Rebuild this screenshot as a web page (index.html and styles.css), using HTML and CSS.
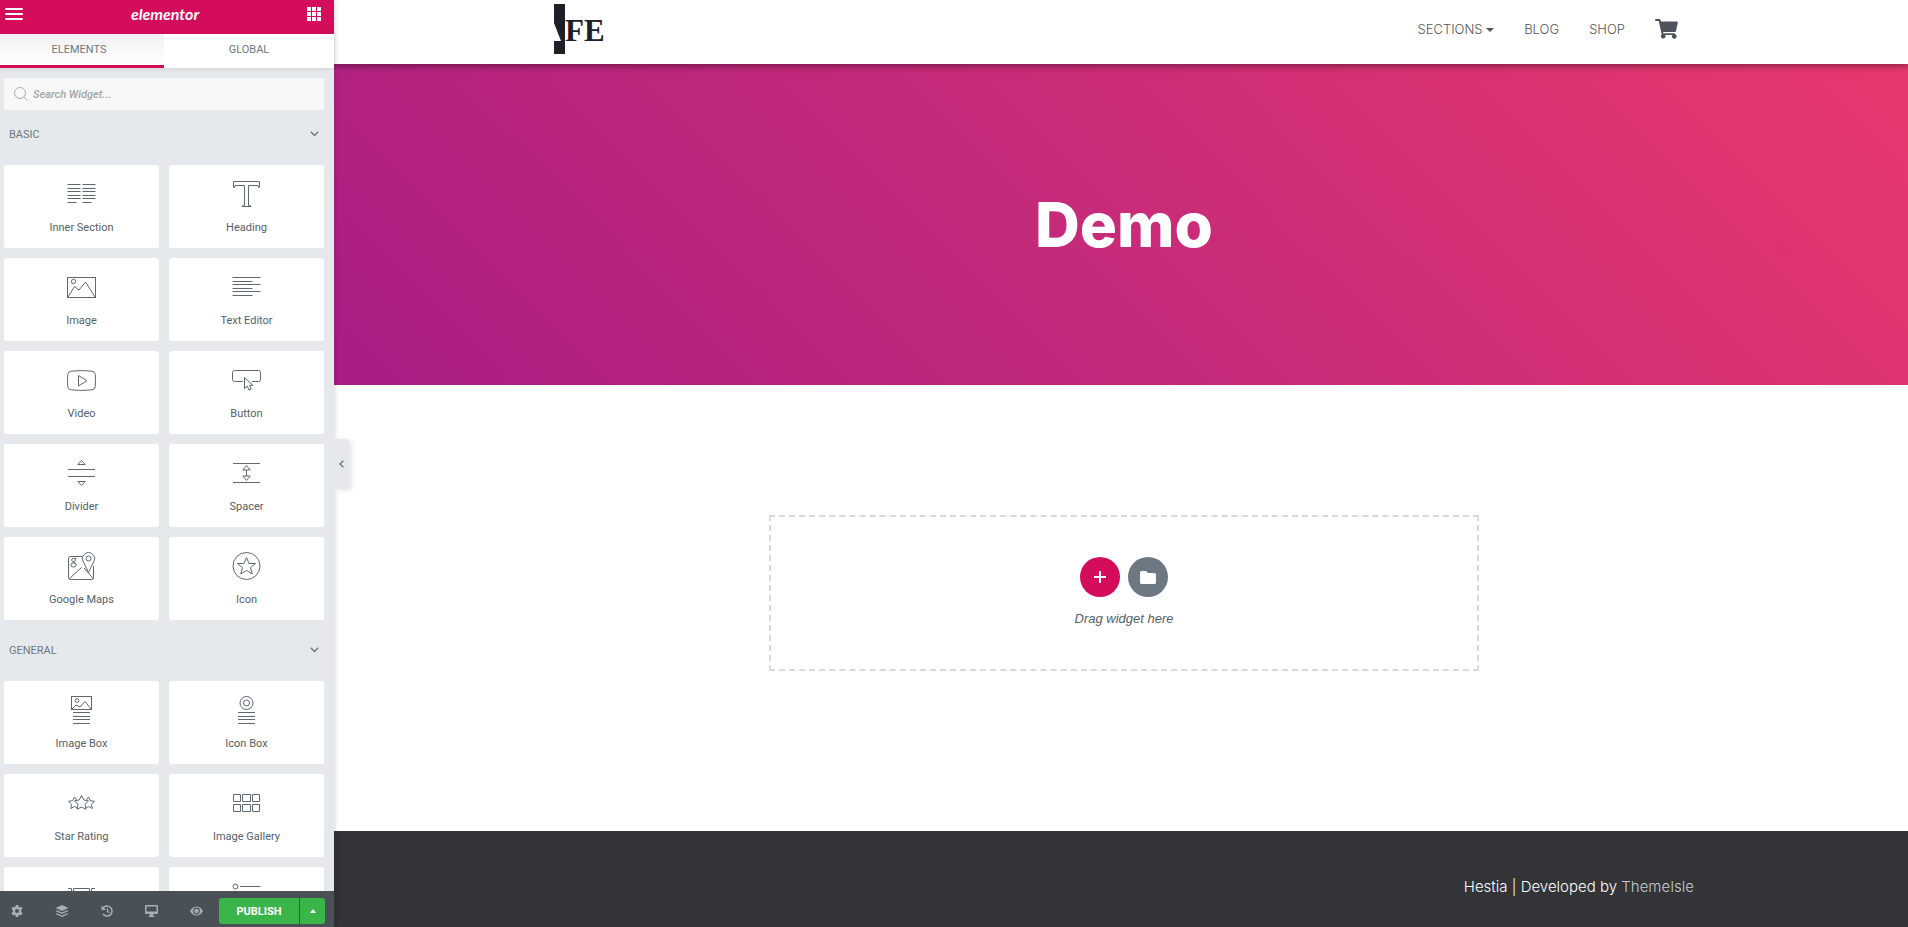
FILE: index.html
```
<!DOCTYPE html>
<html lang="en">
<head>
  <meta charset="UTF-8" />
  <meta name="viewport" content="width=device-width, initial-scale=1.0"/>
  <title>Elementor | Demo</title>
  <link rel="stylesheet" href="styles.css">
</head>
<body>
  <!-- editor panel -->
  <aside class="panel">
    <header class="panel-header">
      <button class="header-btn" aria-label="Menu">
        <svg width="18" height="12" viewBox="0 0 18 12" fill="#fff"><rect width="18" height="2" rx="1"/><rect y="5" width="18" height="2" rx="1"/><rect y="10" width="18" height="2" rx="1"/></svg>
      </button>
      <div class="panel-logo">elementor</div>
      <button class="header-btn" aria-label="Widgets">
        <svg width="14" height="14" viewBox="0 0 14 14" fill="#fff"><path d="M0 0h4v4H0zM5 0h4v4H5zM10 0h4v4h-4zM0 5h4v4H0zM5 5h4v4H5zM10 5h4v4h-4zM0 10h4v4H0zM5 10h4v4H5zM10 10h4v4h-4z"/></svg>
      </button>
    </header>

    <nav class="tabs">
      <button class="tab active">Elements</button>
      <button class="tab">Global</button>
    </nav>

    <div class="panel-content">
      <label class="search">
        <svg width="14" height="14" viewBox="0 0 14 14" fill="none" stroke="#a4afb7"><circle cx="6" cy="6" r="5.5"/><path d="M10 10l3.5 3.5"/></svg>
        <input type="text" placeholder="Search Widget..." aria-label="Search Widget" />
      </label>

      <section class="category">
        <button class="category-title">Basic
          <svg width="9" height="6" viewBox="0 0 9 6"><path d="M.8 .8l3.7 3.7L8.2 .8"/></svg>
        </button>
        <div class="widgets">
          <button class="widget">
            <svg class="icon" viewBox="0 0 29 28"><path d="M.5 4.5h13M.5 8.5h13M.5 11.5h13M.5 15.5h13M.5 18.5h13M.5 22.5h9M15.500 4.500h13M15.500 8.500h13M15.500 11.500h13M15.500 15.500h13M15.500 18.500h13M15.500 22.500h9"/></svg>
            Inner Section
          </button>
          <button class="widget">
            <svg class="icon" viewBox="0 0 29 28"><path d="M1.500 7.500v-6h26v6h-1l-.5-2h-9.500v20l2.500 .5v.5h-9v-.5l2.500-.5v-20h-9.500l-.5 2z"/></svg>
            Heading
          </button>
          <button class="widget">
            <svg class="icon" viewBox="0 0 29 28"><rect x=".5" y="4.500" width="28" height="20"/><circle cx="6.500" cy="8.500" r="2.200"/><path d="M1 24l6.500-10.500 4.500 3.500 6.500-8L28 24"/></svg>
            Image
          </button>
          <button class="widget">
            <svg class="icon" viewBox="0 0 29 28"><path d="M.5 4.500h28M.5 8.500h20M.5 11.500h28M.5 15.500h20M.5 18.500h28M.5 22.500h20"/></svg>
            Text Editor
          </button>
          <button class="widget">
            <svg class="icon" viewBox="0 0 29 28"><path d="M4 5.200q10.500-1.400 21 0q3 .3 3.300 3.300q.4 6 0 12q-.3 3-3.300 3.300q-10.500 1.400-21 0q-3-.3-3.300-3.300q-.4-6 0-12q.3-3 3.300-3.300zM11.500 9.500v10.500l8.500-5.300z"/></svg>
            Video
          </button>
          <button class="widget">
            <svg class="icon" viewBox="0 0 29 28"><path d="M10.500 15.500H2.500q-2 0-2-2v-7q0-2 2-2h24q2 0 2 2v7q0 2-2 2H20M12.500 11.500v11l2.800-2.400 1.700 4 2.200-1-1.700-3.800h3.500z"/></svg>
            Button
          </button>
          <button class="widget">
            <svg class="icon" viewBox="0 0 29 28"><path d="M1 10.500h27M1 17.500h27M14.500 1.500l3.700 4h-7.400zM14.500 26.500l3.700-4h-7.400z"/></svg>
            Divider
          </button>
          <button class="widget">
            <svg class="icon" viewBox="0 0 29 28"><path d="M1 4.500h27M1 23.500h27M14.500 6.500l3.700 4.500h-7.400zM14.500 21.500l3.700-4.500h-7.400zM14.500 11v6"/></svg>
            Spacer
          </button>
          <button class="widget">
            <svg class="icon" viewBox="0 0 29 28"><path d="M15 4.500H3.500q-2 0-2 2v19q0 2 2 2h21q2 0 2-2V14M2 27L14.500 15.500M17 16l9.500 11"/><path d="M21.500 20.500l-5-10.500a6 6 0 1 1 10 0z"/><circle cx="21.500" cy="6.500" r="2.500"/><circle cx="6.500" cy="8" r="1.800"/><ellipse cx="6.500" cy="13" rx="2.700" ry="2"/><path d="M8 6.500h1.500M6 10l2 1"/></svg>
            Google Maps
          </button>
          <button class="widget">
            <svg class="icon" viewBox="0 0 29 28"><circle cx="14.500" cy="14" r="13.500"/><path d="M14.500 5.500l2.500 6h6.500l-5 4.200 1.800 6.300-5.800-3.600L8.700 22l1.800-6.300-5-4.200H12z"/></svg>
            Icon
          </button>
        </div>
      </section>

      <section class="category">
        <button class="category-title">General
          <svg width="9" height="6" viewBox="0 0 9 6"><path d="M.8 .8l3.700 3.700L8.200 .8"/></svg>
        </button>
        <div class="widgets">
          <button class="widget">
            <svg class="icon" viewBox="0 0 29 28"><rect x="4.500" y=".5" width="20" height="13"/><circle cx="10" cy="4.500" r="1.900"/><path d="M5 13l4-4 4 2 5-5.500 6 7.500M6 16.500h17M6 20.500h17M6 23.500h17M6 27.500h17"/></svg>
            Image Box
          </button>
          <button class="widget">
            <svg class="icon" viewBox="0 0 29 28"><circle cx="14.500" cy="7" r="6.500"/><circle cx="14.500" cy="7" r="3"/><path d="M6 16.500h17M6 20.500h17M6 23.500h17M6 27.500h17"/></svg>
            Icon Box
          </button>
          <button class="widget">
            <svg class="icon" viewBox="0 0 29 28"><path d="M14.500 6.500l2.300 4.500 4.700 .8-3.400 3.500 .8 5-4.400-2.300-4.400 2.300 .8-5-3.400-3.500 4.700-.8z"/><path d="M9.500 10.800L7.500 8l-1.800 3.700-4.200 .6 3 3-.7 4.200 3.700-2 2.300 1.200M19.500 10.800l2-2.800 1.800 3.700 4.200 .6-3 3 .7 4.200-3.700-2-2.300 1.200"/></svg>
            Star Rating
          </button>
          <button class="widget">
            <svg class="icon" viewBox="0 0 29 28"><path d="M1.500 5.500h7v7h-7zM10.500 5.500h8v7h-8zM20.500 5.500h7v7h-7zM1.500 15.500h7v7h-7zM10.500 15.500h8v7h-8zM20.500 15.500h7v7h-7z"/></svg>
            Image Gallery
          </button>
          <button class="widget" aria-label="Image Carousel">
            <svg class="icon" viewBox="0 0 29 28"><path d="M1 6.500h3.500v15H1M28 6.500h-3.500v15H28M6.500 6.500h16v15h-16z"/></svg>
          </button>
          <button class="widget" aria-label="Icon List">
            <svg class="icon" viewBox="0 0 29 28"><circle cx="3.500" cy="4.500" r="2.500"/><circle cx="3.500" cy="14" r="2.500"/><circle cx="3.500" cy="23.500" r="2.500"/><path d="M8 4.500h20.500M8 14.500h20.500M8 23.500h20.500"/></svg>
          </button>
        </div>
      </section>
    </div>

    <footer class="panel-footer">
      <div class="tools">
        <button class="tool" aria-label="Settings">
          <svg width="12" height="12" viewBox="0 0 12 12"><path fill-rule="evenodd" d="M4.800 0h2.400l.4 1.700 1 .6 1.700-.6 1.200 2.100L10.200 5v2l1.300 1.200-1.200 2.100-1.700-.6-1 .6-.4 1.700H4.800l-.4-1.700-1-.6-1.700 .6L.5 8.200 1.800 7V5L.5 3.800l1.200-2.100 1.700 .6 1-.6zM6 4a2 2 0 1 0 0 4a2 2 0 0 0 0-4z"/></svg>
        </button>
        <button class="tool" aria-label="Navigator">
          <svg width="14" height="12" viewBox="0 0 14 12"><path d="M7 0l6.500 3L7 6 .5 3zM2 5.200l5 2.300 5-2.300 1.500 .8L7 9 .5 6zM2 8.200l5 2.300 5-2.300 1.500 .8L7 12 .5 9z"/></svg>
        </button>
        <button class="tool" aria-label="History">
          <svg width="12" height="12" viewBox="0 0 12 12"><path d="M2.200 2.800A5 5 0 1 1 2 9" fill="none" stroke="#a4afb7" stroke-width="1.600"/><path d="M.5 .5v4.500H5z"/><path d="M6.500 3.200v3.300l2 1.300" fill="none" stroke="#a4afb7" stroke-width="1.300"/></svg>
        </button>
        <button class="tool" aria-label="Responsive mode">
          <svg width="13" height="12" viewBox="0 0 13 12"><path fill-rule="evenodd" d="M1 0h11q1 0 1 1v7q0 1-1 1H8l.5 2H9.500v1h-6v-1h1L5 9H1Q0 9 0 8V1q0-1 1-1zM1.500 1.500v5h10v-5z"/></svg>
        </button>
        <button class="tool" aria-label="Preview changes">
          <svg width="13" height="10" viewBox="0 0 13 10"><path fill-rule="evenodd" d="M6.500 .5Q10.500 .5 13 5 10.500 9.500 6.500 9.500T0 5Q2.500 .5 6.500 .5zM6.500 1.600a3.400 3.400 0 1 0 0 6.800a3.400 3.400 0 0 0 0-6.800z"/><circle cx="6.500" cy="5" r="2.300"/></svg>
        </button>
      </div>
      <button class="publish">Publish</button>
      <button class="publish-more" aria-label="Save options">
        <svg width="6" height="4" viewBox="0 0 6 4" fill="#fff"><path d="M3 0l3 4H0z"/></svg>
      </button>
    </footer>

    <button class="panel-toggle" aria-label="Hide panel">
      <svg width="5" height="8" viewBox="0 0 5 8"><path d="M4.300 .8L1 4l3.300 3.200"/></svg>
    </button>
  </aside>

  <!-- page preview -->
  <div class="preview">
    <header class="site-header">
      <div class="container">
        <a href="#" class="site-logo" aria-label="JFE">
          <svg width="52" height="50" viewBox="0 0 52 50" fill="#1f2027"><path d="M0 0h11v50H0V37h7L0 19z"/><text x="11" y="37">FE</text></svg>
        </a>
        <nav class="site-nav">
          <a href="#">Sections <span class="caret"></span></a>
          <a href="#">Blog</a>
          <a href="#">Shop</a>
          <a href="#" class="cart" aria-label="Cart">
            <svg width="23" height="20" viewBox="0 0 23 20" fill="#4d545c"><path d="M1 0h3.500q.8 0 1 .8L5.900 2.500H22q1.100 0 .8 1.200L21 12q-.2 .9-1.100 .9H8.100l.3 1.400h10.900q1 0 .8 1a2.300 2.300 0 1 1-2.700 .7H10.200A2.300 2.300 0 1 1 6.700 15.500L3.700 2H1Q0 2 0 1t1-1z"/></svg>
          </a>
        </nav>
      </div>
    </header>

    <div class="hero">
      <h1>Demo</h1>
    </div>

    <main>
      <div class="drop-area">
        <div class="drop-buttons">
          <button class="round-btn add" aria-label="Add new section">
            <svg width="12" height="12" viewBox="0 0 12 12" fill="#fff"><path d="M5 0h2v5h5v2H7v5H5V7H0V5h5z"/></svg>
          </button>
          <button class="round-btn" aria-label="Add template">
            <svg width="16" height="13" viewBox="0 0 16 13" fill="#fff"><path d="M1.500 0H6l2 2h6.500Q16 2 16 3.500v8q0 1.500-1.500 1.500h-13Q0 13 0 11.500v-10Q0 0 1.500 0z"/></svg>
          </button>
        </div>
        <p>Drag widget here</p>
      </div>
    </main>

    <footer class="site-footer">
      <div class="container">
        <p>Hestia | Developed by <a href="#">ThemeIsle</a></p>
      </div>
    </footer>
  </div>
</body>
</html>
```

FILE: styles.css
```
* {
  margin: 0;
  padding: 0;
  box-sizing: border-box;
}

body {
  display: flex;
  height: 100vh;
  overflow: hidden;
  background: #fff;
  font-family: Roboto, sans-serif;
}

button {
  border: none;
  background: none;
  font-family: inherit;
  cursor: pointer;
}

a {
  color: inherit;
  text-decoration: none;
}

svg {
  display: block;
}

/* panel */
.panel {
  position: relative;
  z-index: 10;
  width: 334px;
  flex-shrink: 0;
  display: flex;
  flex-direction: column;
  background: #e6e9ec;
  color: #556068;
  box-shadow: 0 0 6px rgba(0,0,0,0.2);
}

.panel-header {
  height: 34px;
  flex-shrink: 0;
  display: flex;
  justify-content: space-between;
  padding: 0 13px 6px 5px;
  align-items: center;
  background: #d30c5c;
}

.panel-logo {
  color: #fff;
  font-family: Lato, sans-serif;
  font-size: 16px;
  line-height: 20px;
  font-weight: bold;
  font-style: italic;
}

.tabs {
  height: 34px;
  flex-shrink: 0;
  display: grid;
  grid-template-columns: 164px 1fr;
  background: #fff;
  box-shadow: 0 1px 4px rgba(0,0,0,0.1);
}

.tab {
  border-bottom: 3px solid transparent;
  color: #6d7882;
  font-size: 11px;
  text-transform: uppercase;
}

.tab.active {
  padding-right: 6px;
  border-color: #d30c5c;
  background: linear-gradient(#f1f1f1, #fff);
}

.panel-content {
  flex: 1;
  min-height: 0;
  overflow: hidden;
  padding: 10px 10px 0 4px;
}

.search {
  display: flex;
  align-items: center;
  height: 32px;
  margin-bottom: 7px;
  padding-left: 10px;
  gap: 5px;
  border-radius: 3px;
  background: #f8f8f8;
}

.search input {
  flex: 1;
  border: none;
  outline: none;
  background: none;
  font-family: inherit;
  font-size: 11px;
  font-weight: 500;
  font-style: italic;
}

.search input::placeholder {
  color: #a0a5aa;
}

.category {
  margin-bottom: 13px;
}

.category-title {
  display: flex;
  align-items: center;
  justify-content: space-between;
  width: 100%;
  height: 34px;
  margin-bottom: 14px;
  padding: 0 5px;
  color: #6d7882;
  font-size: 11px;
  text-transform: uppercase;
}

.category-title svg,
.panel-toggle svg {
  fill: none;
  stroke: #6d7882;
  stroke-width: 1.5px;
}

.widgets {
  display: grid;
  grid-template-columns: 1fr 1fr;
  gap: 10px;
}

.widget {
  display: flex;
  flex-direction: column;
  align-items: center;
  gap: 13px;
  height: 83px;
  padding-top: 15px;
  border-radius: 3px;
  background: #fff;
  color: #556068;
  font-size: 11px;
  line-height: 14px;
}

.icon {
  width: 29px;
  height: 28px;
  flex-shrink: 0;
  fill: none;
  stroke: #5d6871;
}

.panel-footer {
  display: flex;
  align-items: center;
  height: 36px;
  flex-shrink: 0;
  padding: 4px 9px 0 2px;
  background: #495157;
}

.tools {
  flex: 1;
  display: flex;
  gap: 16px;
}

.tool {
  display: flex;
  align-items: center;
  justify-content: center;
  width: 29px;
  height: 28px;
}

.tool svg {
  fill: #a4afb7;
}

.publish,
.publish-more {
  height: 26px;
  background: #39b54a;
  color: #fff;
}

.publish {
  width: 80px;
  margin-right: 1px;
  border-radius: 3px 0 0 3px;
  font-size: 11px;
  font-weight: bold;
  text-transform: uppercase;
}

.publish-more {
  display: flex;
  align-items: center;
  justify-content: center;
  width: 25px;
  border-radius: 0 3px 3px 0;
}

/* handle on the panel edge */
.panel-toggle {
  position: absolute;
  top: 50%;
  left: 100%;
  display: flex;
  align-items: center;
  justify-content: center;
  width: 15px;
  height: 50px;
  margin-top: -25px;
  border-radius: 0 3px 3px 0;
  background: #e6e9ec;
  box-shadow: 3px 1px 5px rgba(0,0,0,0.1);
}

/* preview */
.preview {
  flex: 1;
  min-width: 0;
  display: flex;
  flex-direction: column;
  font-family: Inter, sans-serif;
}

.site-header,
.hero,
main,
.site-footer {
  padding-left: 6px;
}

.container {
  display: flex;
  align-items: center;
  justify-content: space-between;
  width: 100%;
  max-width: 1140px;
  margin: 0 auto;
}

.site-header {
  position: relative;
  z-index: 1;
  height: 64px;
  padding-top: 4px;
  background: #fff;
  box-shadow: 0 1px 8px rgba(0,0,0,0.5);
}

.site-logo text {
  font-family: "Liberation Serif", serif;
  font-size: 31px;
  font-weight: bold;
}

.site-nav {
  display: flex;
  align-items: center;
  gap: 30px;
  padding-right: 16px;
  color: #555;
  font-size: 13px;
  line-height: 16px;
  font-weight: 300;
  text-transform: uppercase;
}

.caret {
  display: inline-block;
  border: 4px solid transparent;
  border-top-color: #555;
  border-bottom: none;
  vertical-align: middle;
}

.hero {
  display: flex;
  align-items: center;
  justify-content: center;
  height: 321px;
  background: linear-gradient(45deg, #a81d84 0%, #e8396e 100%);
}

.hero h1 {
  color: #fff;
  font-size: 62px;
  line-height: 70px;
  font-weight: 800;
}

main {
  flex: 1;
  padding-top: 130px;
}

.drop-area {
  display: flex;
  flex-direction: column;
  align-items: center;
  max-width: 710px;
  height: 156px;
  margin: 0 auto;
  padding-top: 40px;
  border: 2px dashed #d5dadf;
}

.drop-buttons {
  display: flex;
  gap: 8px;
  margin-bottom: 12px;
}

.round-btn {
  display: flex;
  align-items: center;
  justify-content: center;
  width: 40px;
  height: 40px;
  border-radius: 50%;
  background: #6d7882;
}

.round-btn.add {
  background: #d30c5c;
}

.drop-area p {
  color: #556068;
  font-family: "Liberation Sans", sans-serif;
  font-size: 13px;
  line-height: 20px;
  font-style: italic;
}

.site-footer {
  height: 96px;
  padding-top: 46px;
  background: #323437;
}

.site-footer p {
  margin-left: auto;
  color: #fff;
  font-size: 15px;
  line-height: 20px;
  font-weight: 300;
}

.site-footer a {
  color: #c5cbd0;
}
```
